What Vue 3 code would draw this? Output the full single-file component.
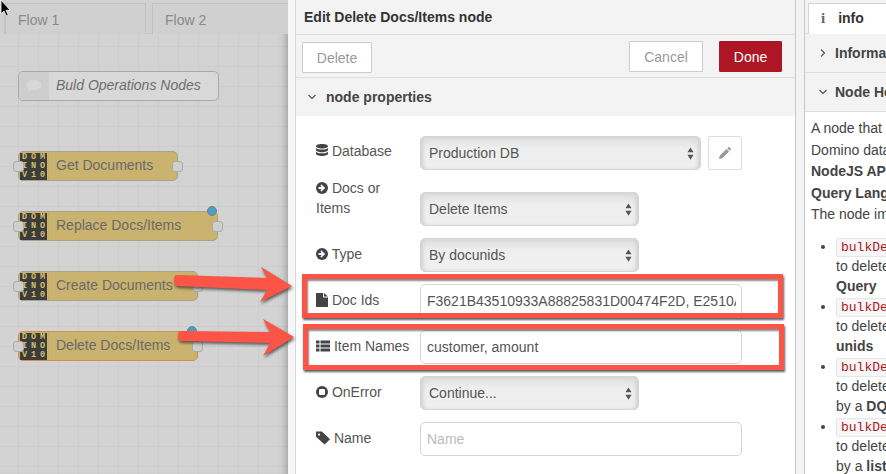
<template>
  <div class="app">
    <div class="canvas">
      <div class="tabs">
        <div class="tab stub"></div>
        <div class="tab first">Flow 1</div>
        <div class="tab second">Flow 2</div>
      </div>
      <div class="comment">
        <div class="comment-icon">
          <svg width="18" height="14" viewBox="0 0 18 14"><path d="M9 1c4.400 0 7.500 2 7.500 5S13.400 11 9 11c-.8 0-1.500 0-2.200-.2L3 13l1-3.200C2.500 9 1.500 7.600 1.500 6 1.500 3 4.600 1 9 1z" fill="#d8d8d8" /></svg>
        </div>
        <span>Buld Operations Nodes</span>
      </div>
      <div
        v-for="node in nodes"
        :key="node.name"
        class="node"
        :class="{ selected: node.selected }"
        :style="{ top: node.top + 'px', width: node.width + 'px' }"
      >
        <div class="node-icon">
          <div class="domino">
            <span v-for="(c, i) in 'DOMINOV10'" :key="i">{{ c }}</span>
          </div>
        </div>
        <span class="node-label">{{ node.name }}</span>
        <i class="port in"></i>
        <i class="port out"></i>
        <i v-if="node.changed" class="changed"></i>
      </div>
    </div>

    <div class="tray">
      <div class="tray-inner">
        <div class="tray-title">Edit Delete Docs/Items node</div>
        <div class="tray-actions">
          <button class="btn delete">Delete</button>
          <div class="actions-right">
            <button class="btn">Cancel</button>
            <button class="btn done">Done</button>
          </div>
        </div>
        <div class="section-head">
          <svg class="chev" width="10" height="6" viewBox="0 0 10 6"><path d="M1.500 1l3.500 3.500L8.500 1" fill="none" stroke="#555" stroke-width="1.200" /></svg>
          node properties
        </div>
        <div class="form">
          <div class="row">
            <label>
              <svg class="ico" viewBox="0 0 12 14"><path d="M6 0c3.300 0 6 .9 6 2.200S9.300 4.400 6 4.400 0 3.500 0 2.200 2.700 0 6 0zM0 4c1 1 3.400 1.500 6 1.500S11 5 12 4v2c0 1.200-2.700 2.200-6 2.200S0 7.200 0 6zm0 3.800c1 1 3.400 1.500 6 1.500s5-.5 6-1.500v2c0 1.200-2.700 2.200-6 2.200s-6-1-6-2.200z" /></svg>
              Database
            </label>
            <div class="select wide">Production DB<svg class="updown" viewBox="0 0 8 14"><path d="M4 0l3.500 5.500h-7zM4 14L.5 8.500h7z" /></svg></div>
            <button class="edit">
              <svg width="12" height="12" viewBox="0 0 12 12"><path d="M0 12l.7-3.300L7.500 2l2.600 2.600-6.800 6.700zM8.300 1.200l1-1c.3-.3.700-.3 1 0l1.500 1.500c.3.300.3.700 0 1l-1 1z" fill="#999" /></svg>
            </button>
          </div>
          <div class="row tall">
            <label>
              <svg class="ico" viewBox="0 0 12 12"><circle cx="6" cy="6" r="6" /><path d="M2.500 5h3.200L4.300 3.300l1.200-.9L9.200 6 5.500 9.600l-1.200-.9L5.700 7H2.500z" fill="#fff" /></svg>
              Docs or Items
            </label>
            <div class="select">Delete Items<svg class="updown" viewBox="0 0 8 14"><path d="M4 0l3.500 5.500h-7zM4 14L.5 8.500h7z" /></svg></div>
          </div>
          <div class="row">
            <label>
              <svg class="ico" viewBox="0 0 12 12"><circle cx="6" cy="6" r="6" /><path d="M2.500 5h3.200L4.300 3.300l1.200-.9L9.200 6 5.500 9.600l-1.200-.9L5.700 7H2.500z" fill="#fff" /></svg>
              Type
            </label>
            <div class="select">By docunids<svg class="updown" viewBox="0 0 8 14"><path d="M4 0l3.500 5.500h-7zM4 14L.5 8.500h7z" /></svg></div>
          </div>
          <div class="row">
            <label>
              <svg class="ico" viewBox="0 0 12 14"><path d="M0 0h7v4.500h5V14H0zM8 0l4 3.500H8z" /></svg>
              Doc Ids
            </label>
            <input class="field" value="F3621B43510933A88825831D00474F2D, E2510A7C93D1" />
          </div>
          <div class="row">
            <label>
              <svg class="ico ico-list" viewBox="0 0 14 11"><path d="M0 0h3.500v3H0zM4.500 0H14v3H4.500zM0 4h3.500v3H0zM4.500 4H14v3H4.500zM0 8h3.500v3H0zM4.500 8H14v3H4.500z" /></svg>
              Item Names
            </label>
            <input class="field" value="customer, amount" />
          </div>
          <div class="row">
            <label>
              <svg class="ico" viewBox="0 0 12 12"><circle cx="6" cy="6" r="6" /><rect x="3" y="3" width="6" height="6" rx="1.200" fill="#fff" /></svg>
              OnError
            </label>
            <div class="select">Continue...<svg class="updown" viewBox="0 0 8 14"><path d="M4 0l3.500 5.500h-7zM4 14L.5 8.500h7z" /></svg></div>
          </div>
          <div class="row">
            <label>
              <svg class="ico ico-list" viewBox="0 0 13 12"><path fill-rule="evenodd" d="M0 0h5.500L13 7.200 8 12 0 4.800zM2.800 1.800a1 1 0 100 2 1 1 0 000-2z" /></svg>
              Name
            </label>
            <input class="field" placeholder="Name" />
          </div>
        </div>
      </div>
    </div>

    <div class="gutter"></div>

    <div class="sidebar">
      <div class="side-tabs">
        <div class="side-tab">
          <span class="info-i">i</span>
          <b>info</b>
        </div>
      </div>
      <div class="side-head">
        <span class="side-chev"><svg width="6" height="10" viewBox="0 0 6 10"><path d="M1 1.500L4.500 5 1 8.500" fill="none" stroke="#555" stroke-width="1.200" /></svg></span>
        <span>Information</span>
      </div>
      <div class="side-head">
        <span class="side-chev"><svg width="10" height="6" viewBox="0 0 10 6"><path d="M1.500 1l3.500 3.500L8.500 1" fill="none" stroke="#555" stroke-width="1.200" /></svg></span>
        <span>Node Help</span>
      </div>
      <div class="help">
        <p>A node that</p>
        <p>Domino data</p>
        <p><b>NodeJS API</b></p>
        <p><b>Query Language</b></p>
        <p>The node implements</p>
        <ul>
          <li v-for="item in helpItems" :key="item.tail">
            <code>bulkDelete</code>
            <p>to delete</p>
            <p>{{ item.lead }}<b>{{ item.tail }}</b></p>
          </li>
        </ul>
      </div>
    </div>

    <div class="hl hl-one"></div>
    <div class="hl hl-two"></div>
    <svg class="arrows" width="886" height="474" viewBox="0 0 886 474">
      <path d="M177 275L267 278L261 267L292 286L260 302L267 290L177 286Q173 285 174 280Q174 275 177 275z" />
      <path d="M181 331L270 332L263 319L294 337L263 356L270 343L181 341Q177 340 178 336Q178 331 181 331z" />
    </svg>
    <svg class="cursor" width="12" height="18" viewBox="0 0 12 18"><path d="M1 0v14l3-3 2.300 5 2-.9L6 10.300h4.300z" fill="#000" stroke="#fff" stroke-width=".8" /></svg>
  </div>
</template>

<script setup>
const nodes = [
  { name: "Get Documents", top: 151, width: 160 },
  { name: "Replace Docs/Items", top: 211, width: 200, changed: true },
  { name: "Create Documents", top: 271, width: 180 },
  { name: "Delete Docs/Items", top: 331, width: 180, changed: true, selected: true },
];

const helpItems = [
  { lead: "", tail: "Query" },
  { lead: "", tail: "unids" },
  { lead: "by a ", tail: "DQL" },
  { lead: "by a ", tail: "list" },
];
</script>

<style>
html,
body {
  margin: 0;
  overflow: hidden;
}
</style>

<style scoped>
.app {
  position: relative;
  display: flex;
  width: 886px;
  height: 474px;
  overflow: hidden;
  background: #fff;
  font-family: "Liberation Sans", Arial, sans-serif;
  font-size: 14px;
  color: #555;
}

.canvas {
  position: relative;
  flex: 0 0 288px;
  background-color: #d3d3d3;
  background-image: linear-gradient(#cdcdcd 1px, transparent 1px), linear-gradient(90deg, #cdcdcd 1px, transparent 1px);
  background-size: 20px 20px;
  background-position: -2px 6px;
  box-shadow: inset -7px 0 7px -5px rgba(0, 0, 0, 0.25);
}

.tabs {
  display: flex;
  gap: 6px;
  height: 34px;
  box-sizing: border-box;
  padding-top: 3px;
  background: #d1d1d1;
  border-bottom: 1px solid #c6c6c6;
}

.tab {
  box-sizing: border-box;
  height: 31px;
  padding: 6px 12px;
  background: #d0d0d0;
  border: 1px solid #c2c2c2;
  border-bottom: none;
  line-height: 20px;
  color: #8a8a8a;
}

.stub {
  width: 5px;
  margin-right: -6px;
  padding: 0;
  border-left: none;
}

.first {
  width: 141px;
}

.second {
  flex: 1;
  border-right: none;
}

.comment {
  position: absolute;
  left: 18px;
  top: 71px;
  display: flex;
  align-items: center;
  box-sizing: border-box;
  width: 201px;
  height: 30px;
  background: #d8d8d8;
  border: 1px solid #a8a8a8;
  border-radius: 5px;
  font-style: italic;
  color: #6e6e6e;
  overflow: hidden;
}

.comment span {
  margin-bottom: 2px;
}

.comment-icon {
  display: flex;
  align-items: center;
  justify-content: center;
  align-self: stretch;
  width: 30px;
  margin-right: 7px;
  background: #cecece;
}

.node {
  position: absolute;
  left: 18px;
  display: flex;
  align-items: center;
  box-sizing: border-box;
  height: 30px;
  background: #c9b36f;
  border: 1px solid #a9a28c;
  border-radius: 5px;
}

.node.selected {
  border-color: #d98a4d;
}

.node-icon {
  display: flex;
  align-items: center;
  justify-content: center;
  align-self: stretch;
  width: 30px;
  flex: none;
  border-right: 1px solid #c2ae6c;
  box-sizing: border-box;
}

.domino {
  display: grid;
  grid-template-columns: repeat(3, 9px);
  grid-auto-rows: 9px;
  width: 27px;
  background: #3c3c3a;
  color: #d6bf6e;
  font-family: "Liberation Mono", monospace;
  font-size: 8.500px;
  font-weight: bold;
  line-height: 9px;
  text-align: center;
}

.node-label {
  margin: 0 0 3px 7px;
  color: #6a6a6a;
  white-space: nowrap;
}

.port {
  position: absolute;
  top: 9px;
  box-sizing: border-box;
  width: 11px;
  height: 11px;
  background: #cfcfcf;
  border: 1.500px solid #ababab;
  border-radius: 3px;
}

.port.in {
  left: -6px;
}

.port.out {
  right: -6px;
}

.changed {
  position: absolute;
  top: -6px;
  right: 0;
  width: 8px;
  height: 8px;
  background: #4a9fc9;
  border: 1px solid #7c7c7c;
  border-radius: 50%;
}

.tray {
  flex: 0 0 508px;
  box-sizing: border-box;
  padding-left: 7px;
  background: #f6f6f6;
  border-right: 1px solid #c9c9c9;
}

.tray-inner {
  height: 100%;
  background: #fff;
  border-left: 1px solid #d8d8d8;
}

.tray-title {
  box-sizing: border-box;
  height: 35px;
  padding: 7px 8px;
  background: #f3f3f3;
  border-bottom: 1px solid #dedede;
  font-weight: bold;
  line-height: 20px;
  color: #333;
}

.tray-actions {
  display: flex;
  justify-content: space-between;
  box-sizing: border-box;
  height: 43px;
  padding: 6px 13px 0 6px;
  background: #f3f3f3;
  border-bottom: 1px solid #dedede;
}

.actions-right {
  display: flex;
  gap: 16px;
}

.btn {
  box-sizing: border-box;
  width: 74px;
  height: 31px;
  padding: 0;
  background: #fff;
  border: 1px solid #ccc;
  border-radius: 1px;
  font: inherit;
  color: #999;
}

.delete {
  width: 70px;
  margin-top: 1px;
}

.done {
  width: 63px;
  background: #ad1625;
  border-color: #ad1625;
  color: #fff;
}

.section-head {
  display: flex;
  align-items: center;
  gap: 9px;
  box-sizing: border-box;
  height: 38px;
  padding-left: 11px;
  background: #f3f3f3;
  font-weight: bold;
  color: #444;
}

.form {
  padding: 20px 0 0 20px;
}

.row {
  display: flex;
  align-items: flex-start;
  margin-bottom: 12px;
}

.row label {
  box-sizing: border-box;
  flex: 0 0 104px;
  margin-top: 6px;
  padding-right: 4px;
  line-height: 20px;
  color: #555;
}

.row:first-child label {
  margin-top: 5px;
}

.ico {
  width: 12px;
  height: 14px;
  fill: #444;
  vertical-align: -2px;
}

.ico-list {
  width: 14px;
}

.row.tall label {
  margin-top: -4px;
}

.row.tall .select {
  margin-top: 10px;
}

.select {
  position: relative;
  box-sizing: border-box;
  width: 219px;
  height: 34px;
  padding: 0 8px;
  background: #efefef;
  border: 1px solid #d4d4d4;
  border-radius: 5px;
  box-shadow: inset 0 10px 10px -6px #d6d6d6, inset 4px 0 5px -3px #c4c4c4, inset -4px 0 5px -3px #c4c4c4;
  line-height: 32px;
  color: #555;
}

.select.wide {
  width: 281px;
}

.updown {
  position: absolute;
  right: 6px;
  top: 10px;
  width: 7px;
  height: 13px;
  fill: #555;
}

.edit {
  display: flex;
  align-items: center;
  justify-content: center;
  box-sizing: border-box;
  width: 34px;
  height: 34px;
  margin-left: 7px;
  padding: 0;
  background: #fff;
  border: 1px solid #ddd;
  border-radius: 2px;
}

.field {
  box-sizing: border-box;
  width: 322px;
  height: 34px;
  padding: 0 5px 0 6px;
  background: #fff;
  border: 1px solid #d4d4d4;
  border-radius: 5px;
  font: inherit;
  color: #555;
  outline: none;
}

.field::placeholder {
  color: #bbb;
}

.gutter {
  flex: 0 0 9px;
  box-sizing: border-box;
  background: #f3f3f3;
  border-right: 1px solid #c9c9c9;
}

.sidebar {
  flex: 1;
  min-width: 0;
  overflow: hidden;
  white-space: nowrap;
}

.side-tabs {
  box-sizing: border-box;
  height: 34px;
  padding: 3px 0 0 3px;
  background: #f3f3f3;
  border-bottom: 1px solid #dedede;
}

.side-tab {
  display: flex;
  align-items: center;
  gap: 13px;
  box-sizing: border-box;
  height: 31px;
  margin-bottom: -1px;
  padding: 0 0 2px 12px;
  background: #fff;
  border: 1px solid #d4d4d4;
  border-right: none;
  border-bottom: none;
  color: #333;
}

.info-i {
  font-family: "Liberation Serif", serif;
  font-size: 15px;
  font-weight: bold;
  color: #666;
}

.side-head {
  display: flex;
  align-items: center;
  box-sizing: border-box;
  height: 39px;
  padding-left: 13px;
  background: #f3f3f3;
  border-bottom: 1px solid #dedede;
  font-weight: bold;
  color: #444;
}

.side-chev {
  display: flex;
  align-items: center;
  justify-content: center;
  flex: none;
  width: 10px;
  margin-right: 7px;
}

.help {
  padding: 6px 0 0 6px;
  color: #444;
}

.help p {
  margin: 0;
  line-height: 21.500px;
}

.help ul {
  margin: 12px 0 0;
  padding-left: 25px;
}

.help li {
  height: 60px;
}

.help li p {
  position: relative;
  top: -1px;
  line-height: 20px;
}

.help code {
  display: block;
  box-sizing: border-box;
  width: 200px;
  height: 19px;
  padding: 0 4px;
  background: #f7f7f7;
  border: 1px solid #e6e6e6;
  border-radius: 2px;
  font-family: "Liberation Mono", monospace;
  font-size: 13px;
  line-height: 17px;
  color: #ad1625;
}

.hl {
  position: absolute;
  box-sizing: border-box;
  border: 5px solid #fc5447;
  box-shadow: 1px 2px 2px rgba(40, 40, 40, 0.75), inset 1px 2px 2px rgba(40, 40, 40, 0.55);
  pointer-events: none;
}

.hl-one {
  left: 302px;
  top: 274px;
  width: 481px;
  height: 44px;
}

.hl-two {
  left: 303px;
  top: 324px;
  width: 481px;
  height: 46px;
}

.arrows {
  position: absolute;
  left: 0;
  top: 0;
  fill: #fc5447;
  filter: drop-shadow(1px 2px 1.500px rgba(40, 40, 40, 0.7));
  pointer-events: none;
}

.cursor {
  position: absolute;
  left: 0;
  top: 0;
}
</style>
